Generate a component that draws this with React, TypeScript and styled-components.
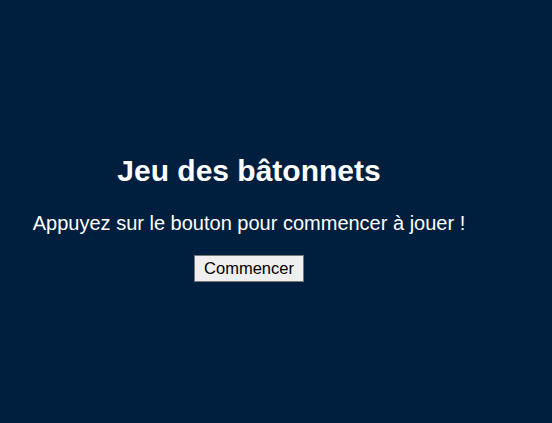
import React from "react";
import styled, { createGlobalStyle } from "styled-components";

const Global = createGlobalStyle`
  html, body { margin: 0; padding: 0; background: #001f3f; }
  body { font-family: "Liberation Sans", Arial, sans-serif; color: #ffffff; }
`;

const Page = styled.div`
  min-height: 100vh;
  display: flex;
  align-items: center;
  padding: 12px 0 0 8px;
  box-sizing: border-box;
`;

const Panel = styled.div`
  width: 482px;
  text-align: center;
`;

const Title = styled.h1`
  font-size: 30px;
  line-height: 34px;
  font-weight: bold;
  margin: 0 0 24px;
`;

const Message = styled.p`
  font-size: 20px;
  line-height: 23px;
  margin: 0 0 20px;
`;

const StartButton = styled.button`
  font-family: "Liberation Sans", Arial, sans-serif;
  font-size: 16.5px;
  line-height: 19px;
  color: #000;
  background: #efefef;
  border: 1px solid #767676;
  border-radius: 0;
  padding: 3px 9px;
`;

export default function App() {
  return (
    <>
      <Global />
      <Page>
        <Panel>
          <Title>Jeu des bâtonnets</Title>
          <Message>Appuyez sur le bouton pour commencer à jouer !</Message>
          <StartButton>Commencer</StartButton>
        </Panel>
      </Page>
    </>
  );
}
